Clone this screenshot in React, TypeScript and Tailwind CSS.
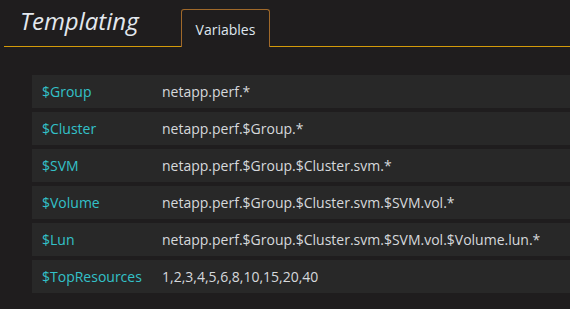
const variables = [
  { name: '$Group', query: 'netapp.perf.*' },
  { name: '$Cluster', query: 'netapp.perf.$Group.*' },
  { name: '$SVM', query: 'netapp.perf.$Group.$Cluster.svm.*' },
  { name: '$Volume', query: 'netapp.perf.$Group.$Cluster.svm.$SVM.vol.*' },
  { name: '$Lun', query: 'netapp.perf.$Group.$Cluster.svm.$SVM.vol.$Volume.lun.*' },
  { name: '$TopResources', query: '1,2,3,4,5,6,8,10,15,20,40' },
];

export default function App() {
  return (
    <div className="w-[570px] h-[309px] overflow-hidden bg-[#1f1d1e] font-['Open_Sans',sans-serif]">
      {/* Header with tabs */}
      <div className="ml-[4px] h-[47px] flex items-end border-b border-[#d39a0a]">
        <h2 className="pl-[16px] w-[176px] self-start pt-[5px] text-[24px] italic leading-[32px] text-[#e3e8ee]">
          Templating
        </h2>
        <div className="ml-[1px] -mb-px h-[38px] w-[89px] rounded-t-[3px] border border-b-0 border-[#a0692a] bg-[#1f1d1e] flex items-center justify-center text-[14px] text-[#dfe6ee] pt-[2px]">
          Variables
        </div>
      </div>

      {/* Variable list */}
      <div className="pl-[32px] pt-[28px] flex flex-col gap-[4px]">
        {variables.map((v) => (
          <div key={v.name} className="h-[33px] bg-[#282828] flex items-center text-[14px]">
            <span className="w-[130px] pl-[10px] text-[#33c1c9]">{v.name}</span>
            <span className="text-[#d6d8dc]">{v.query}</span>
          </div>
        ))}
      </div>
    </div>
  );
}
